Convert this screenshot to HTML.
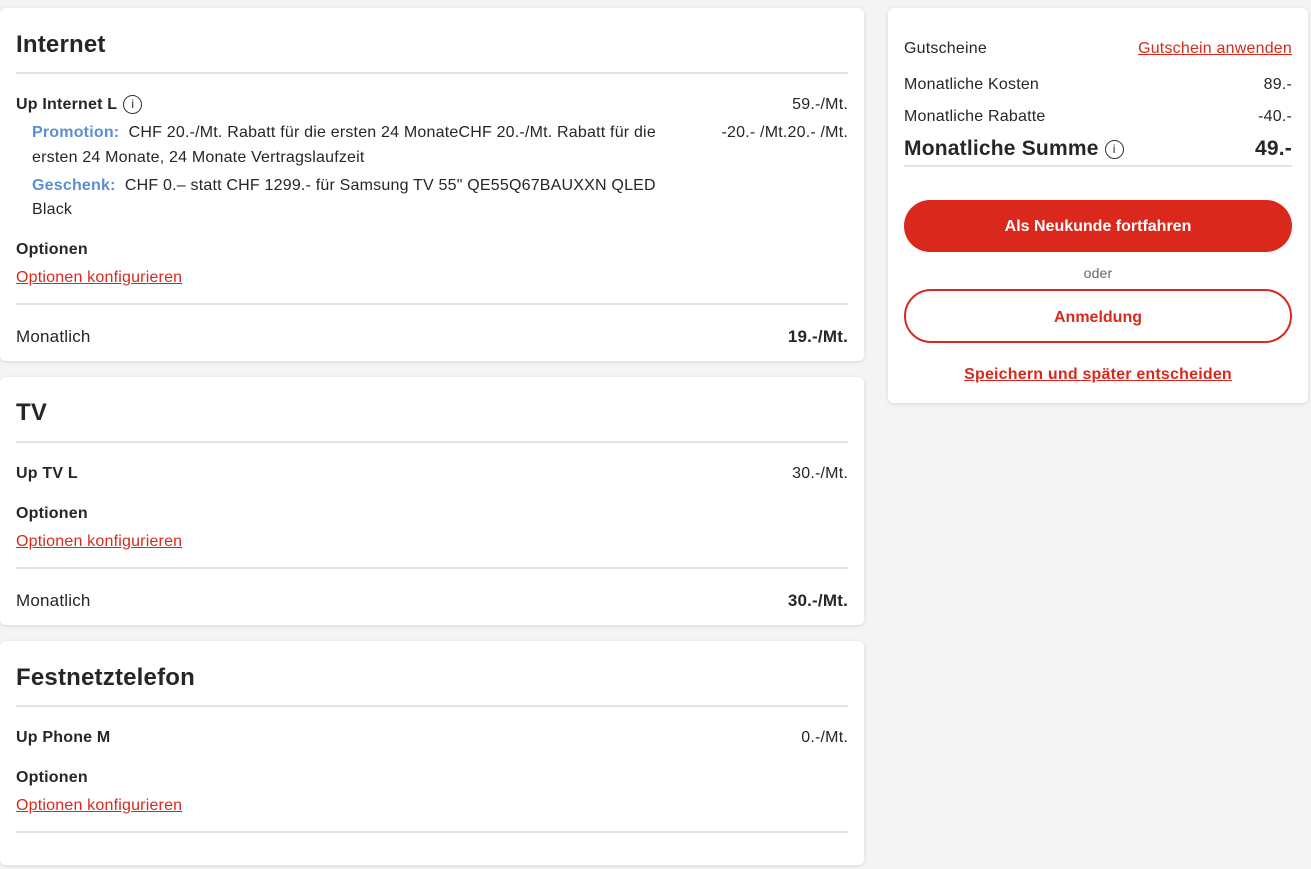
<!DOCTYPE html>
<html><head><meta charset="utf-8"><style>
*{box-sizing:border-box;margin:0;padding:0}
body{width:1311px;height:869px;background:#f4f4f4;font-family:"Liberation Sans",sans-serif;color:#262626;position:relative;overflow:hidden;font-size:16px}
.card{position:absolute;background:#fff;border-radius:6px;box-shadow:0 1px 4px rgba(0,0,0,.12)}
.a{position:absolute;white-space:nowrap;line-height:20px;margin-top:2px;letter-spacing:.2px}
.t{font-size:24px;font-weight:bold;line-height:30px}
.hr{position:absolute;height:2px;background:#e3e3e3}
.b{font-weight:bold}
.r{color:#da291c;text-decoration:underline}
.blue{color:#5b8fd1;font-weight:bold}
.ic{display:inline-block;width:19px;height:19px;border:1.5px solid #333;border-radius:50%;font-size:12px;line-height:16px;text-align:center;vertical-align:middle;font-weight:normal;margin-left:6px;letter-spacing:0}
.btn{position:absolute;left:904px;width:388px;border-radius:27px;text-align:center;font-weight:bold}
</style></head><body>
<div class="card" style="left:0;top:8px;width:864px;height:353px"></div>
<div class="card" style="left:0;top:377px;width:864px;height:248px"></div>
<div class="card" style="left:0;top:641px;width:864px;height:224px"></div>
<div class="card" style="left:888px;top:8px;width:420px;height:395px"></div>

<div class="a t" style="left:16px;top:28px">Internet</div>
<div class="hr" style="left:16px;top:72px;width:832px"></div>
<div class="a b" style="left:16px;top:93px">Up Internet L<span class="ic">i</span></div>
<div class="a" style="right:463px;top:93px">59.-/Mt.</div>
<div class="a" style="left:32px;top:121px"><span class="blue">Promotion:</span>&nbsp; CHF 20.-/Mt. Rabatt für die ersten 24 MonateCHF 20.-/Mt. Rabatt für die</div>
<div class="a" style="right:463px;top:121px">-20.- /Mt.20.- /Mt.</div>
<div class="a" style="left:32px;top:146px">ersten 24 Monate, 24 Monate Vertragslaufzeit</div>
<div class="a" style="left:32px;top:174px"><span class="blue">Geschenk:</span>&nbsp; CHF 0.– statt CHF 1299.- für Samsung TV 55" QE55Q67BAUXXN QLED</div>
<div class="a" style="left:32px;top:198px">Black</div>
<div class="a b" style="left:16px;top:238px">Optionen</div>
<div class="a r" style="left:16px;top:266px">Optionen konfigurieren</div>
<div class="hr" style="left:16px;top:303px;width:832px"></div>
<div class="a" style="left:16px;top:325px;font-size:17px">Monatlich</div>
<div class="a b" style="right:463px;top:325px;font-size:17px">19.-/Mt.</div>

<div class="a t" style="left:16px;top:396px">TV</div>
<div class="hr" style="left:16px;top:441px;width:832px"></div>
<div class="a b" style="left:16px;top:462px">Up TV L</div>
<div class="a" style="right:463px;top:462px">30.-/Mt.</div>
<div class="a b" style="left:16px;top:502px">Optionen</div>
<div class="a r" style="left:16px;top:530px">Optionen konfigurieren</div>
<div class="hr" style="left:16px;top:567px;width:832px"></div>
<div class="a" style="left:16px;top:589px;font-size:17px">Monatlich</div>
<div class="a b" style="right:463px;top:589px;font-size:17px">30.-/Mt.</div>

<div class="a t" style="left:16px;top:661px">Festnetztelefon</div>
<div class="hr" style="left:16px;top:705px;width:832px"></div>
<div class="a b" style="left:16px;top:726px">Up Phone M</div>
<div class="a" style="right:463px;top:726px">0.-/Mt.</div>
<div class="a b" style="left:16px;top:766px">Optionen</div>
<div class="a r" style="left:16px;top:794px">Optionen konfigurieren</div>
<div class="hr" style="left:16px;top:831px;width:832px"></div>

<div class="a" style="left:904px;top:37px">Gutscheine</div>
<div class="a r" style="right:19px;top:37px">Gutschein anwenden</div>
<div class="a" style="left:904px;top:73px">Monatliche Kosten</div>
<div class="a" style="right:19px;top:73px">89.-</div>
<div class="a" style="left:904px;top:105px">Monatliche Rabatte</div>
<div class="a" style="right:19px;top:105px">-40.-</div>
<div class="a b" style="left:904px;top:135px;font-size:21px;line-height:24px">Monatliche Summe<span class="ic">i</span></div>
<div class="a b" style="right:19px;top:135px;font-size:21px;line-height:24px">49.-</div>
<div class="hr" style="left:904px;top:165px;width:388px"></div>
<div class="btn" style="top:200px;height:52px;line-height:54px;background:#da291c;color:#fff">Als Neukunde fortfahren</div>
<div class="a" style="left:904px;width:388px;text-align:center;top:261px;font-size:14px;color:#666">oder</div>
<div class="btn" style="top:289px;height:54px;line-height:54px;border:2px solid #da291c;color:#da291c">Anmeldung</div>
<div class="a r b" style="left:904px;width:388px;text-align:center;top:363px">Speichern und später entscheiden</div>
</body></html>
